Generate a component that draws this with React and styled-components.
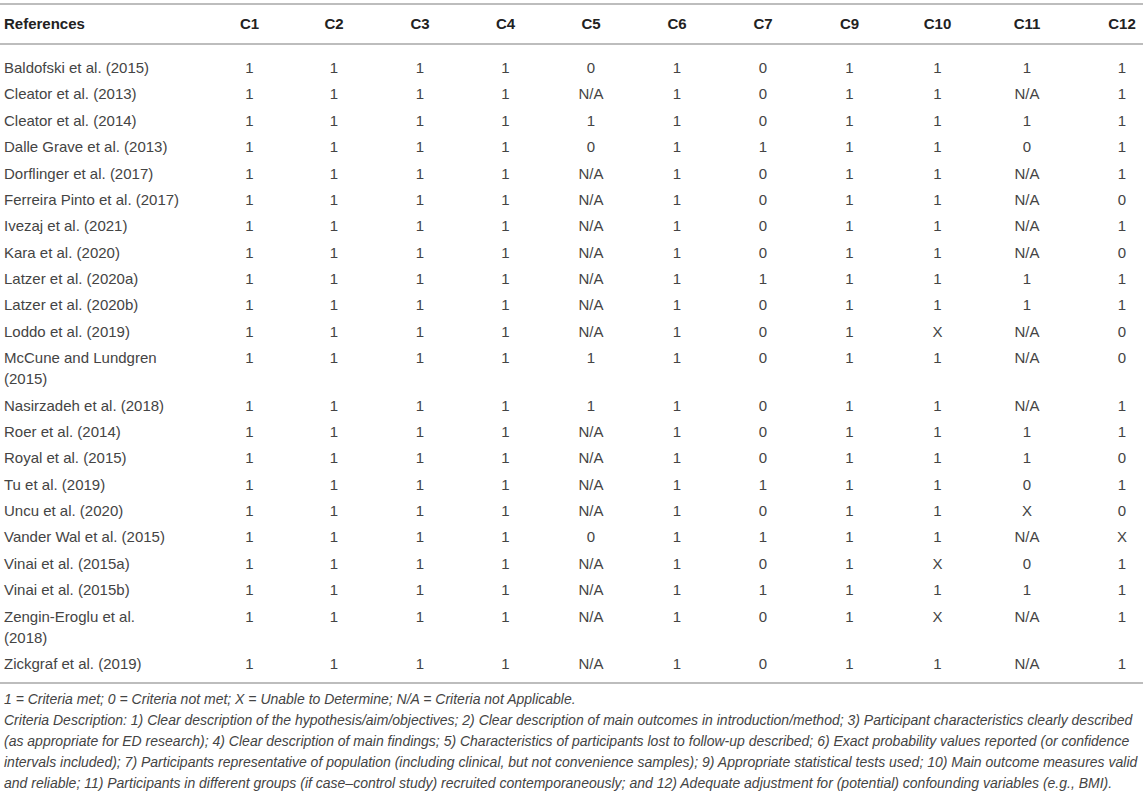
import React from "react"
import styled, { createGlobalStyle } from "styled-components"

const GlobalStyle = createGlobalStyle`
  html, body {
    margin: 0;
    padding: 0;
    background: #fff;
  }
  body {
    font-family: "Liberation Sans", Arial, sans-serif;
    color: #444;
  }
`

const Page = styled.div`
  width: 1143px;
  padding-top: 3px;
`

const Table = styled.table`
  width: 1143px;
  table-layout: fixed;
  border-collapse: collapse;
  font-size: 15px;
  line-height: 21px;
`

const Head = styled.thead`
  border-top: 2px solid #bdbdbd;
  border-bottom: 2px solid #bdbdbd;
`

const Body = styled.tbody`
  border-bottom: 2px solid #bdbdbd;
  tr:first-child td {
    padding-top: 12px;
  }
  tr:last-child td {
    padding-bottom: 8px;
  }
`

const HeadCell = styled.th`
  padding: 8px 0 9px;
  padding-left: ${(p) => (p.$left ? 4 : p.$shift || 0)}px;
  text-align: ${(p) => (p.$left ? "left" : "center")};
  font-weight: bold;
  color: #222;
`

const RefCell = styled.td`
  padding: 2.7px 0 2.7px 4px;
  vertical-align: top;
  white-space: pre-line;
  color: #444;
`

const Cell = styled.td`
  padding: 2.7px 0 2.7px ${(p) => p.$shift || 0}px;
  vertical-align: top;
  text-align: center;
  color: #444;
`

const Footer = styled.div`
  padding: 5px 0 0 4px;
  font-size: 14px;
  line-height: 21px;
  font-style: italic;
  color: #444;
`

const FootLine = styled.div`
  white-space: nowrap;
`

const widths = [208, 83, 86, 86, 85, 86, 86, 86, 87, 89, 90, 71]
const heads = ["C1", "C2", "C3", "C4", "C5", "C6", "C7", "C9", "C10", "C11", "C12"]
// last column sits closer to the right edge
const shifts = [0, 0, 0, 0, 0, 0, 0, 0, 0, 0, 29]

// C5, C7, C10, C11, C12 vary; the rest are always 1
const rows = [
  ["Baldofski et al. (2015)", "0", "0", "1", "1", "1"],
  ["Cleator et al. (2013)", "N/A", "0", "1", "N/A", "1"],
  ["Cleator et al. (2014)", "1", "0", "1", "1", "1"],
  ["Dalle Grave et al. (2013)", "0", "1", "1", "0", "1"],
  ["Dorflinger et al. (2017)", "N/A", "0", "1", "N/A", "1"],
  ["Ferreira Pinto et al. (2017)", "N/A", "0", "1", "N/A", "0"],
  ["Ivezaj et al. (2021)", "N/A", "0", "1", "N/A", "1"],
  ["Kara et al. (2020)", "N/A", "0", "1", "N/A", "0"],
  ["Latzer et al. (2020a)", "N/A", "1", "1", "1", "1"],
  ["Latzer et al. (2020b)", "N/A", "0", "1", "1", "1"],
  ["Loddo et al. (2019)", "N/A", "0", "X", "N/A", "0"],
  ["McCune and Lundgren\n(2015)", "1", "0", "1", "N/A", "0"],
  ["Nasirzadeh et al. (2018)", "1", "0", "1", "N/A", "1"],
  ["Roer et al. (2014)", "N/A", "0", "1", "1", "1"],
  ["Royal et al. (2015)", "N/A", "0", "1", "1", "0"],
  ["Tu et al. (2019)", "N/A", "1", "1", "0", "1"],
  ["Uncu et al. (2020)", "N/A", "0", "1", "X", "0"],
  ["Vander Wal et al. (2015)", "0", "1", "1", "N/A", "X"],
  ["Vinai et al. (2015a)", "N/A", "0", "X", "0", "1"],
  ["Vinai et al. (2015b)", "N/A", "1", "1", "1", "1"],
  ["Zengin-Eroglu et al.\n(2018)", "N/A", "0", "X", "N/A", "1"],
  ["Zickgraf et al. (2019)", "N/A", "0", "1", "N/A", "1"],
]

const expand = (r) => ["1", "1", "1", "1", r[1], "1", r[2], "1", r[3], r[4], r[5]]

const notes = [
  "1 = Criteria met; 0 = Criteria not met; X = Unable to Determine; N/A = Criteria not Applicable.",
  "Criteria Description: 1) Clear description of the hypothesis/aim/objectives; 2) Clear description of main outcomes in introduction/method; 3) Participant characteristics clearly described",
  "(as appropriate for ED research); 4) Clear description of main findings; 5) Characteristics of participants lost to follow-up described; 6) Exact probability values reported (or confidence",
  "intervals included); 7) Participants representative of population (including clinical, but not convenience samples); 9) Appropriate statistical tests used; 10) Main outcome measures valid",
  "and reliable; 11) Participants in different groups (if case–control study) recruited contemporaneously; and 12) Adequate adjustment for (potential) confounding variables (e.g., BMI).",
]

const App = () => {
  return (
    <Page>
      <GlobalStyle />
      <Table>
        <colgroup>
          {widths.map((w, i) => (
            <col key={i} style={{ width: w }} />
          ))}
        </colgroup>
        <Head>
          <tr>
            <HeadCell $left>References</HeadCell>
            {heads.map((h, i) => (
              <HeadCell key={h} $shift={shifts[i]}>
                {h}
              </HeadCell>
            ))}
          </tr>
        </Head>
        <Body>
          {rows.map((r) => (
            <tr key={r[0]}>
              <RefCell>{r[0]}</RefCell>
              {expand(r).map((v, i) => (
                <Cell key={i} $shift={shifts[i]}>
                  {v}
                </Cell>
              ))}
            </tr>
          ))}
        </Body>
      </Table>
      <Footer>
        {notes.map((n, i) => (
          <FootLine key={i}>{n}</FootLine>
        ))}
      </Footer>
    </Page>
  )
}

export default App
